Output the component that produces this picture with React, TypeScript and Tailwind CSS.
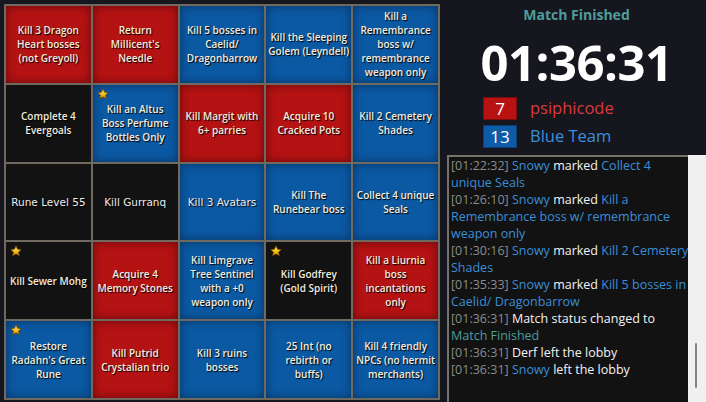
import React from 'react';

type Tone = 'r' | 'b' | 'k';

interface Goal {
  lines: string[];
  tone: Tone;
  star?: boolean;
  alt?: boolean; // rendered in the fallback font
}

const goals: Goal[] = [
  { lines: ['Kill 3 Dragon', 'Heart bosses', '(not Greyoll)'], tone: 'r' },
  { lines: ['Return', "Millicent's", 'Needle'], tone: 'r' },
  { lines: ['Kill 5 bosses in', 'Caelid/', 'Dragonbarrow'], tone: 'b' },
  { lines: ['Kill the Sleeping', 'Golem (Leyndell)'], tone: 'b' },
  { lines: ['Kill a', 'Remembrance', 'boss w/', 'remembrance', 'weapon only'], tone: 'b' },

  { lines: ['Complete 4', 'Evergoals'], tone: 'k' },
  { lines: ['Kill an Altus', 'Boss Perfume', 'Bottles Only'], tone: 'b', star: true },
  { lines: ['Kill Margit with', '6+ parries'], tone: 'r' },
  { lines: ['Acquire 10', 'Cracked Pots'], tone: 'r' },
  { lines: ['Kill 2 Cemetery', 'Shades'], tone: 'b' },

  { lines: ['Rune Level 55'], tone: 'k', alt: true },
  { lines: ['Kill Gurranq'], tone: 'k', alt: true },
  { lines: ['Kill 3 Avatars'], tone: 'b', alt: true },
  { lines: ['Kill The', 'Runebear boss'], tone: 'b' },
  { lines: ['Collect 4 unique', 'Seals'], tone: 'b' },

  { lines: ['Kill Sewer Mohg'], tone: 'k', star: true },
  { lines: ['Acquire 4', 'Memory Stones'], tone: 'r' },
  { lines: ['Kill Limgrave', 'Tree Sentinel', 'with a +0', 'weapon only'], tone: 'b' },
  { lines: ['Kill Godfrey', '(Gold Spirit)'], tone: 'k', star: true },
  { lines: ['Kill a Liurnia', 'boss', 'incantations', 'only'], tone: 'r' },

  { lines: ['Restore', "Radahn's Great", 'Rune'], tone: 'b', star: true },
  { lines: ['Kill Putrid', 'Crystalian trio'], tone: 'r' },
  { lines: ['Kill 3 ruins', 'bosses'], tone: 'b' },
  { lines: ['25 Int (no', 'rebirth or', 'buffs)'], tone: 'b' },
  { lines: ['Kill 4 friendly', 'NPCs (no hermit', 'merchants)'], tone: 'b' },
];

const toneClass: Record<Tone, string> = {
  r: 'bg-[#b51213] shadow-[inset_0_0_10px_rgba(0,0,0,0.45)]',
  b: 'bg-[#0b58a3] shadow-[inset_0_0_10px_rgba(0,0,0,0.4)]',
  k: 'bg-[#121212]',
};

const Star = () => (
  <svg width="12" height="12" viewBox="0 0 24 24" className="absolute left-[4px] top-[3px]">
    <defs>
      <linearGradient id="starFill" x1="0" y1="0" x2="0" y2="1">
        <stop offset="0" stopColor="#fff39a" />
        <stop offset="0.5" stopColor="#f7c51e" />
        <stop offset="1" stopColor="#d98b00" />
      </linearGradient>
    </defs>
    <path
      d="M12 1.5l3.2 6.9 7.4.8-5.5 5 1.6 7.4L12 17.8l-6.7 3.8 1.6-7.4-5.5-5 7.4-.8z"
      fill="url(#starFill)"
      stroke="#6b4300"
      strokeWidth="1.6"
      strokeLinejoin="round"
    />
  </svg>
);

const GoalCell = ({ goal }: { goal: Goal }) => (
  <div className={`relative flex items-center justify-center text-center ${toneClass[goal.tone]}`}>
    {goal.star && <Star />}
    {goal.alt ? (
      <div
        className="text-[10.5px] leading-[14px] text-[#ececec] [text-shadow:1px_1px_1px_#000]"
        style={{ fontFamily: '"DejaVu Sans", sans-serif' }}
      >
        {goal.lines.map((l, i) => (
          <div key={i} className="whitespace-nowrap">{l}</div>
        ))}
      </div>
    ) : (
      <div className="text-[10px] leading-[14px] font-semibold text-[#f3ecdf] [text-shadow:1px_1px_1px_#000]">
        {goal.lines.map((l, i) => (
          <div key={i} className="whitespace-nowrap">{l}</div>
        ))}
      </div>
    )}
  </div>
);

// log entries, one array of spans per visual line
type Seg = { t: string; c: 'ts' | 'user' | 'w' | 'goal' | 'teal' };
const segColor: Record<Seg['c'], string> = {
  ts: 'text-[#8c8c8c]',
  user: 'text-[#3b8ed8]',
  w: 'text-[#f2f2f2]',
  goal: 'text-[#3b8ed8]',
  teal: 'text-[#4f9c9a]',
};

const logLines: Seg[][] = [
  [{ t: '[01:22:32] ', c: 'ts' }, { t: 'Snowy', c: 'user' }, { t: ' marked ', c: 'w' }, { t: 'Collect 4', c: 'goal' }],
  [{ t: 'unique Seals', c: 'goal' }],
  [{ t: '[01:26:10] ', c: 'ts' }, { t: 'Snowy', c: 'user' }, { t: ' marked ', c: 'w' }, { t: 'Kill a', c: 'goal' }],
  [{ t: 'Remembrance boss w/ remembrance', c: 'goal' }],
  [{ t: 'weapon only', c: 'goal' }],
  [{ t: '[01:30:16] ', c: 'ts' }, { t: 'Snowy', c: 'user' }, { t: ' marked ', c: 'w' }, { t: 'Kill 2 Cemetery', c: 'goal' }],
  [{ t: 'Shades', c: 'goal' }],
  [{ t: '[01:35:33] ', c: 'ts' }, { t: 'Snowy', c: 'user' }, { t: ' marked ', c: 'w' }, { t: 'Kill 5 bosses in', c: 'goal' }],
  [{ t: 'Caelid/ Dragonbarrow', c: 'goal' }],
  [{ t: '[01:36:31] ', c: 'ts' }, { t: 'Match status changed to', c: 'w' }],
  [{ t: 'Match Finished', c: 'teal' }],
  [{ t: '[01:36:31] ', c: 'ts' }, { t: 'Derf left the lobby', c: 'w' }],
  [{ t: '[01:36:31] ', c: 'ts' }, { t: 'Snowy', c: 'user' }, { t: ' left the lobby', c: 'w' }],
];

export default function App() {
  return (
    <div
      className="w-[706px] h-[402px] overflow-hidden bg-[#16161f] flex"
      style={{ fontFamily: '"Open Sans", "Noto Sans", sans-serif' }}
    >
      {/* bingo board */}
      <div className="ml-[4px] mt-[4px] w-[436px] h-[396px] border-2 border-[#6f695f] bg-[#6f695f] grid grid-cols-5 grid-rows-5 gap-[2px] shrink-0">
        {goals.map((g, i) => (
          <GoalCell key={i} goal={g} />
        ))}
      </div>

      {/* side panel */}
      <div className="ml-[7px] flex-1 flex flex-col min-w-0">
        <div className="pt-[5px] text-center text-[14px] leading-[20px] font-bold text-[#4f9c9a]">
          Match Finished
        </div>
        <div className="mt-[13px] text-center text-[49px] leading-[49px] font-bold text-white tracking-[-0.5px]">
          01:36:31
        </div>

        <div className="mt-[10px] pl-[36px] flex flex-col gap-[5px]">
          <div className="flex items-center h-[23px]">
            <div className="w-[34px] h-[23px] bg-[#b81212] border border-[#7c0d0d] flex items-center justify-center text-white text-[17px] leading-none">
              7
            </div>
            <span className="ml-[13px] text-[16.5px] leading-none text-[#db3a3a]">psiphicode</span>
          </div>
          <div className="flex items-center h-[23px]">
            <div className="w-[34px] h-[23px] bg-[#0e5ca8] border border-[#0a3d72] flex items-center justify-center text-white text-[17px] leading-none">
              13
            </div>
            <span className="ml-[13px] text-[16.5px] leading-none text-[#3b8ed8]">Blue Team</span>
          </div>
        </div>

        {/* event log */}
        <div className="mt-[7px] flex-1 flex border-t-2 border-l-2 border-[#77736c] bg-[#121212] min-h-0">
          <div className="flex-1 pl-[2px] text-[12.5px] leading-[17px]">
            {logLines.map((line, i) => (
              <div key={i} className="whitespace-nowrap">
                {line.map((s, j) => (
                  <span key={j} className={segColor[s.c]}>{s.t}</span>
                ))}
              </div>
            ))}
          </div>
          <div className="relative w-[18px] -mt-[2px] bg-[#f0f0f0] shrink-0">
            <div className="absolute left-[7px] top-[188px] w-[2px] h-[45px] bg-[#858585] rounded-full" />
          </div>
        </div>
      </div>
    </div>
  );
}
